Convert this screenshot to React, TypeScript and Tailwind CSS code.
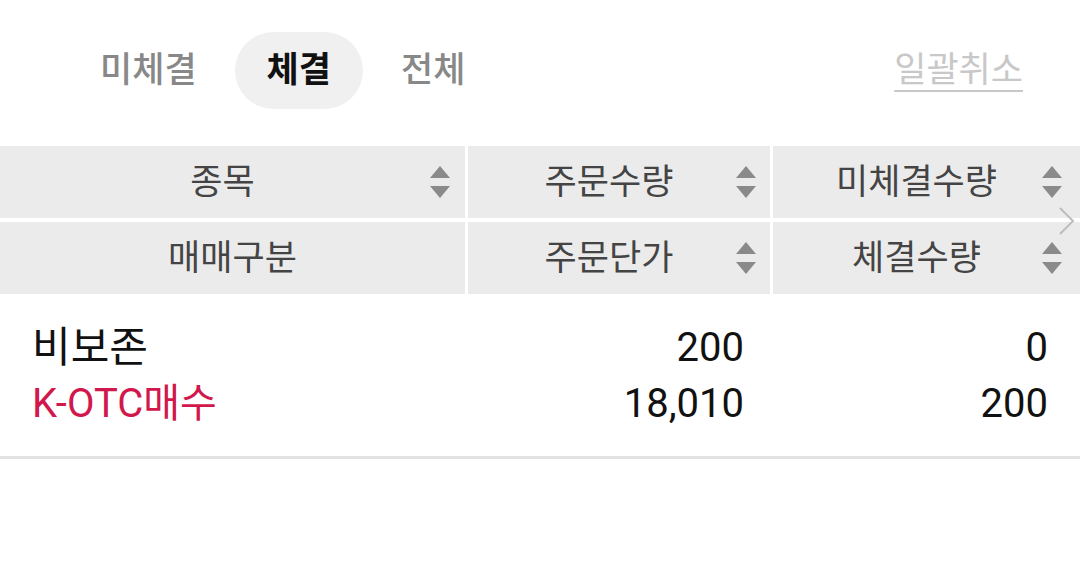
import React from "react";

const font = { fontFamily: '"Roboto", "Noto Sans CJK KR", sans-serif' };

const SortArrows: React.FC<{ className?: string }> = ({ className }) => (
  <svg className={className} width="20" height="32" viewBox="0 0 20 32" fill="#8a8a8a">
    <path d="M10 0 L20 12 L0 12 Z" />
    <path d="M0 20 L20 20 L10 32 Z" />
  </svg>
);

interface HeadCellProps {
  label: string;
  sortable?: boolean;
  arrowRight?: string;
}

const HeadCell: React.FC<HeadCellProps> = ({ label, sortable, arrowRight = "right-[15px]" }) => (
  <div
    className={`relative h-[72px] bg-[#ebebeb] flex items-center justify-center text-[35px] text-[#444] ${
      sortable ? "pr-[20px]" : ""
    }`}
  >
    <span className="leading-none">{label}</span>
    {sortable && <SortArrows className={`absolute top-[20px] ${arrowRight}`} />}
  </div>
);

const tabs = ["미체결", "체결", "전체"];

export default function App() {
  const active = "체결";
  return (
    <div className="w-[1080px] h-[562px] bg-white overflow-hidden" style={font}>
      <div className="flex items-center justify-between pt-[32px] pl-[68px] pr-[57px]">
        <div className="flex gap-[6px]">
          {tabs.map((t) => (
            <div
              key={t}
              className={`h-[77px] px-[32px] rounded-full flex items-center text-[35px] leading-none ${
                t === active ? "bg-[#f0f0f0] text-[#111] font-bold" : "text-[#888] font-medium"
              }`}
            >
              {t}
            </div>
          ))}
        </div>
        <button className="text-[35px] leading-none text-[#c8c8c8] underline underline-offset-[8px] decoration-2">
          일괄취소
        </button>
      </div>

      <div className="relative mt-[37px]">
        <div className="grid grid-cols-[465px_302px_1fr] gap-x-[3px] gap-y-[4px]">
          <HeadCell label="종목" sortable />
          <HeadCell label="주문수량" sortable arrowRight="right-[14px]" />
          <HeadCell label="미체결수량" sortable arrowRight="right-[18px]" />
          <HeadCell label="매매구분" />
          <HeadCell label="주문단가" sortable arrowRight="right-[14px]" />
          <HeadCell label="체결수량" sortable arrowRight="right-[18px]" />
        </div>
        <svg
          className="absolute left-[1059px] top-[61px]"
          width="16"
          height="28"
          viewBox="0 0 16 28"
          fill="none"
          stroke="#bdbdbd"
          strokeWidth="2"
        >
          <path d="M1 1 L14 14 L1 27" />
        </svg>
      </div>

      <div className="grid grid-cols-[465px_302px_1fr] gap-x-[3px] pt-[26px] pb-[24px] border-b-[3px] border-[#e3e3e3] text-[40px] leading-[56px]">
        <div className="pl-[32px]">
          <div className="text-[#111] text-[42px]">비보존</div>
          <div className="text-[#d2174c]">K-OTC매수</div>
        </div>
        <div className="pr-[26px] text-right text-[#111]">
          <div>200</div>
          <div>18,010</div>
        </div>
        <div className="pr-[32px] text-right text-[#111]">
          <div>0</div>
          <div>200</div>
        </div>
      </div>
    </div>
  );
}
